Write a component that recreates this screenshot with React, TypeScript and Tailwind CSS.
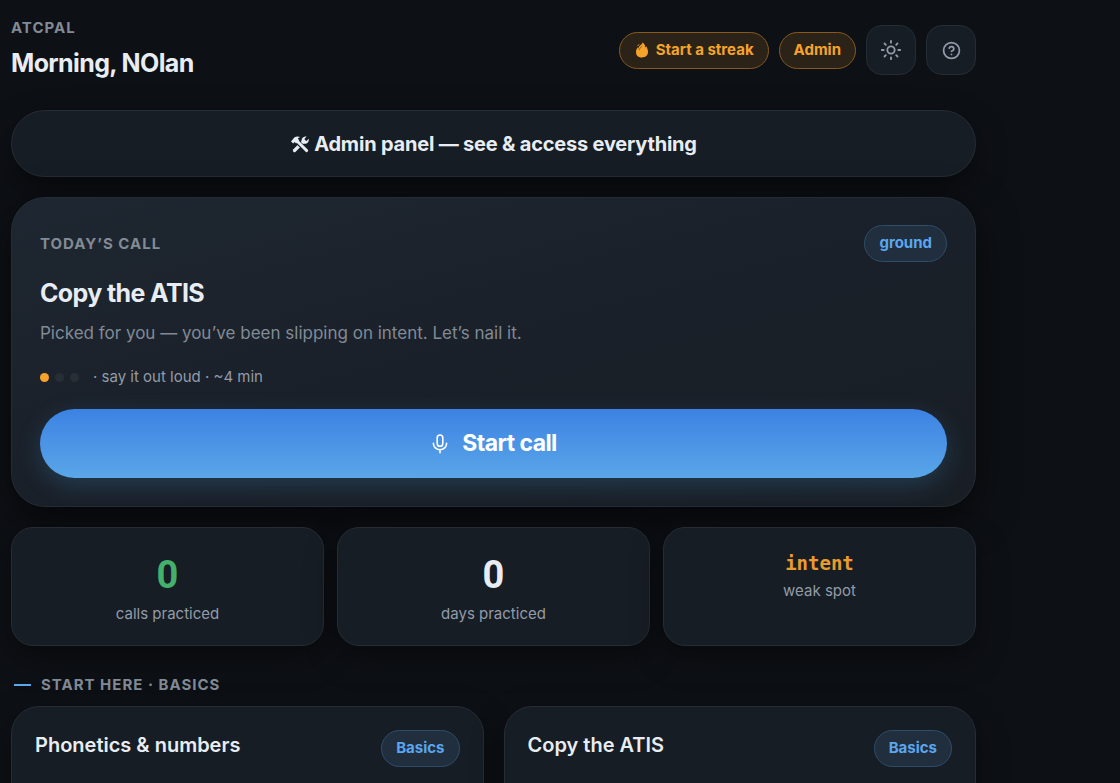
import React from 'react';
import { CircleHelp, Sun } from 'lucide-react';
import clsx from 'clsx';

type Stat = {
    value: string;
    label: string;
    valueClass: string;
};

const stats: Stat[] = [
    {
        value: '0',
        label: 'calls practiced',
        valueClass: "font-['Roboto','Inter',sans-serif] text-[38px] leading-[46px] font-bold text-[#43b06c]",
    },
    {
        value: '0',
        label: 'days practiced',
        valueClass: "font-['Roboto','Inter',sans-serif] text-[38px] leading-[46px] font-bold text-[#e8edf3]",
    },
    {
        value: 'intent',
        label: 'weak spot',
        valueClass: "font-['DejaVu_Sans_Mono','Liberation_Mono',monospace] text-[19px] leading-[23px] font-bold text-[#e89c2e]",
    },
];

const lessons = [
    { title: 'Phonetics & numbers', tag: 'Basics' },
    { title: 'Copy the ATIS', tag: 'Basics' },
];

const surface = 'border border-[#262c34] bg-[#171d24] shadow-[0_12px_32px_rgba(0,0,0,0.4)]';

const Flame = () => (
    <svg width="15" height="18" viewBox="0 0 15 18" fill="currentColor" aria-hidden="true">
        <path d="M8.600 1.500c2.400 1.800 2.700 3.600 2.600 5 .5-.3.800-.7 1-1.300 1.200 1.900 1.900 3.900 1.800 6.100-.2 3.300-2.600 5.200-6.100 5.200-3.700 0-6-2.200-5.900-5.500.1-2 .8-3.400 1.700-4.700l.3 1.700C4.700 5.500 6 4.300 7.300 3.400c.7-.5 1.200-1.100 1.300-1.900z" />
        <path d="M3.200 5.400c.3-1.100 1.100-1.900 2.200-2.400-.1 1-.6 1.600-2.200 2.400z" />
        <path d="M5.400 8.800c.3-1.600 1.200-2.700 2.600-3.500" fill="none" stroke="#7a5020" strokeWidth="0.8" strokeLinecap="round" />
    </svg>
);

const Tools = () => (
    <svg width="20" height="20" viewBox="0 0 20 20" fill="none" stroke="currentColor" aria-hidden="true">
        {/* wrench, bottom left to top right */}
        <path d="M4.500 16.500 14 7" strokeWidth="3.200" strokeLinecap="round" />
        <path
            d="M12 8.300c-1.200-2.600.3-5.500 3.400-5.900l1.200.1-2.200 2.400.4 1.700 1.700.4 2.300-2.200c.5 3.600-2.400 5.600-5 4.800z"
            fill="currentColor"
            stroke="none"
        />
        {/* hammer, top left to bottom right */}
        <path d="m7 7.500 9.500 9" stroke="#171d24" strokeWidth="4.600" />
        <path d="m7 7 9.700 9.600" strokeWidth="2.900" strokeLinecap="round" />
        <path
            d="M1 7.500 4.300 3.600c1.700-1.500 4-1.500 5.900-.6L7.800 4.200l1.400 2.400-3.100 2.800-1.500-1.300-1.400 1.500z"
            fill="currentColor"
            stroke="none"
        />
    </svg>
);

const Microphone = () => (
    <svg
        width="20"
        height="20"
        viewBox="0 0 20 20"
        fill="none"
        stroke="currentColor"
        strokeWidth="1.600"
        strokeLinecap="round"
        aria-hidden="true"
    >
        <rect x="7.200" y="1" width="5.600" height="11.200" rx="2.800" />
        <path d="M3.400 9.400a6.600 6.300 0 0 0 13.200 0M10 15.800v3" />
    </svg>
);

const Chip = ({ children, tone = 'blue' }: { children: React.ReactNode; tone?: 'blue' | 'amber' }) => (
    <span
        className={clsx(
            'inline-flex h-[37px] shrink-0 items-center gap-[7px] rounded-full border px-[14px] text-[15px] font-bold',
            tone === 'blue' && 'border-[#2d4d6b] bg-[#202e3d] text-[#5ba6ee]',
            tone === 'amber' && 'border-[#87591f] bg-[#2c2318] text-[#f5a32b]'
        )}
    >
        {children}
    </span>
);

const IconButton = ({ label, children }: { label: string; children: React.ReactNode }) => (
    <button
        type="button"
        aria-label={label}
        className="flex size-[50px] items-center justify-center rounded-2xl border border-[#262c34] bg-[#171d24] text-[#929ba8]"
    >
        {children}
    </button>
);

const Header = () => (
    <header className="flex items-center justify-between">
        <div>
            <p className="text-[15px] leading-5 font-bold tracking-[1px] text-[#828a95]">ATCPAL</p>
            <h1 className="mt-[6px] text-[25px] leading-[38px] font-bold tracking-tight">Morning, NOlan</h1>
        </div>
        <div className="flex items-center gap-[10px]">
            <Chip tone="amber">
                <Flame />
                Start a streak
            </Chip>
            <Chip tone="amber">Admin</Chip>
            <IconButton label="Toggle theme">
                <Sun size={22} strokeWidth={2} />
            </IconButton>
            <IconButton label="Help">
                <CircleHelp size={19} strokeWidth={2.2} />
            </IconButton>
        </div>
    </header>
);

const TodaysCall = () => (
    <section className="mt-5 rounded-[34px] border border-[#262c34] bg-linear-165 from-[#1e2731] via-[#1a2029] to-[#191e25] px-7 pt-[27px] pb-7 shadow-[0_12px_40px_rgba(0,0,0,0.55)]">
        <div className="flex items-center justify-between">
            <h2 className="text-[15px] leading-5 font-bold tracking-[1px] text-[#828a95]">TODAY’S CALL</h2>
            <Chip>ground</Chip>
        </div>
        <h3 className="mt-[14px] text-[25px] leading-[34px] font-bold tracking-tight">Copy the ATIS</h3>
        <p className="mt-[9px] text-[17px] leading-7 text-[#828a95]">
            Picked for you — you’ve been slipping on intent. Let’s nail it.
        </p>
        <div className="mt-5 flex items-center gap-[14px] text-[15px] leading-5 text-[#929ba8]">
            <span className="flex gap-[6px]">
                <i className="size-[9px] rounded-full bg-[#f5a32b]" />
                <i className="size-[9px] rounded-full bg-[#282e36]" />
                <i className="size-[9px] rounded-full bg-[#282e36]" />
            </span>
            <span>· say it out loud · ~4 min</span>
        </div>
        <button
            type="button"
            className="mt-[22px] flex h-[69px] w-full items-center justify-center gap-3 rounded-full bg-linear-to-b from-[#3c82e2] to-[#5aa6e8] text-[23px] font-bold tracking-tight text-white shadow-[0_8px_24px_rgba(68,160,220,0.22)]"
        >
            <Microphone />
            Start call
        </button>
    </section>
);

export default function App() {
    return (
        <div className="min-h-screen overflow-hidden bg-[#0d1015] font-['Inter','Liberation_Sans',sans-serif] text-[#e8edf3]">
            <main className="max-w-[987px] px-[11px] pt-[18px]">
                <Header />

                <button
                    type="button"
                    className={clsx(
                        surface,
                        'mt-7 flex h-[67px] w-full items-center justify-center gap-1 rounded-full text-xl font-bold tracking-[-0.01em]'
                    )}
                >
                    <Tools />
                    Admin panel — see & access everything
                </button>

                <TodaysCall />

                <div className="mt-5 grid grid-cols-3 gap-[13px]">
                    {stats.map((stat) => (
                        <div key={stat.label} className={clsx(surface, 'h-[119px] rounded-[22px] pt-6 text-center')}>
                            <p className={stat.valueClass}>{stat.value}</p>
                            <p className="mt-[6px] text-[15px] leading-5 text-[#929ba8]">{stat.label}</p>
                        </div>
                    ))}
                </div>

                <h2 className="mt-[29px] flex items-center gap-[10px] pl-[3px] text-[15px] leading-5 font-bold tracking-[1px] text-[#828a95]">
                    <i className="h-[2px] w-[17px] bg-[#5ba6ee]" />
                    START HERE · BASICS
                </h2>

                <div className="mt-[11px] grid grid-cols-2 gap-5">
                    {lessons.map((lesson) => (
                        <article
                            key={lesson.title}
                            className={clsx(surface, 'flex h-40 items-start justify-between rounded-[28px] p-[23px]')}
                        >
                            <h3 className="text-xl leading-[30px] font-semibold">{lesson.title}</h3>
                            <Chip>{lesson.tag}</Chip>
                        </article>
                    ))}
                </div>
            </main>
        </div>
    );
}
